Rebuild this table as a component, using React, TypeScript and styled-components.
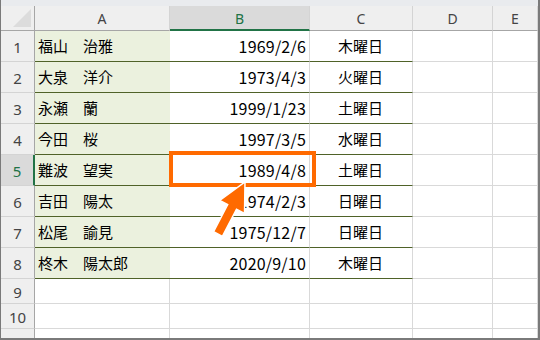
import React from "react";
import styled, { createGlobalStyle } from "styled-components";

const GlobalStyle = createGlobalStyle`
  html, body { margin: 0; padding: 0; background: #ffffff; }
  body { font-family: "Noto Sans CJK JP", "Noto Sans", sans-serif; }
  * { box-sizing: border-box; }
`;

const Frame = styled.div`
  position: relative;
  width: 540px;
  height: 340px;
  overflow: hidden;
  background: #ffffff;
  border-left: 1px solid #7a7a7a;
  border-right: 2px solid #7a7a7a;
  border-bottom: 2px solid #7a7a7a;
`;

const TopStrip = styled.div`
  height: 6px;
  background: #e9ebee;
`;

const Sheet = styled.div`
  display: grid;
  grid-template-columns: 34px 135px 140px 103px 80px 1fr;
  grid-template-rows: 25px repeat(8, 31px) 25px 25px 25px;
`;

const Corner = styled.div`
  background: #efefef;
  border-right: 1px solid #a6a6a6;
  border-bottom: 1px solid #a6a6a6;
  display: flex;
  align-items: flex-end;
  justify-content: flex-end;
  padding: 0 3px 3px 0;
`;

const ColHeader = styled.div<{ $selected?: boolean }>`
  display: flex;
  align-items: center;
  justify-content: center;
  font-family: "Noto Sans", "Liberation Sans", sans-serif;
  font-size: 14px;
  color: ${(p) => (p.$selected ? "#217346" : "#444444")};
  background: ${(p) => (p.$selected ? "#dadada" : "#efefef")};
  border-right: 1px solid #d4d4d4;
  border-bottom: ${(p) => (p.$selected ? "2px solid #217346" : "1px solid #a6a6a6")};
  padding-top: ${(p) => (p.$selected ? "1px" : "0")};
`;

const RowHeader = styled.div<{ $selected?: boolean }>`
  display: flex;
  align-items: center;
  justify-content: center;
  font-family: "Noto Sans", "Liberation Sans", sans-serif;
  font-size: 15px;
  color: ${(p) => (p.$selected ? "#217346" : "#444444")};
  background: ${(p) => (p.$selected ? "#dadada" : "#efefef")};
  border-right: ${(p) => (p.$selected ? "2px solid #217346" : "1px solid #a6a6a6")};
  border-bottom: 1px solid #d4d4d4;
  padding-top: 2px;
`;

type Align = "left" | "right" | "center";

const Cell = styled.div<{
  $fill?: boolean;
  $dark?: boolean;
  $align?: Align;
  $noRight?: boolean;
  $num?: boolean;
}>`
  display: flex;
  align-items: center;
  justify-content: ${(p) =>
    p.$align === "right" ? "flex-end" : p.$align === "center" ? "center" : "flex-start"};
  padding: 0 ${(p) => (p.$num ? "3px" : "4px")} 1px 3px;
  font-size: ${(p) => (p.$num ? "16px" : "15px")};
  letter-spacing: ${(p) => (p.$num ? "0.2px" : "0")};
  color: #000000;
  white-space: pre;
  background: ${(p) => (p.$fill ? "#ebf1de" : "#ffffff")};
  border-right: ${(p) => (p.$noRight ? "none" : "1px solid #d9d9d9")};
  border-bottom: 1px solid ${(p) => (p.$dark ? "#4f6228" : "#d9d9d9")};
`;

const Highlight = styled.div`
  position: absolute;
  left: 168px;
  top: 151px;
  width: 147px;
  height: 36px;
  border: 4px solid #ff6a00;
`;

const ArrowLayer = styled.svg`
  position: absolute;
  left: 0;
  top: 0;
  pointer-events: none;
`;

const rows: [string, string, string][] = [
  ["福山　治雅", "1969/2/6", "木曜日"],
  ["大泉　洋介", "1973/4/3", "火曜日"],
  ["永瀬　蘭", "1999/1/23", "土曜日"],
  ["今田　桜", "1997/3/5", "水曜日"],
  ["難波　望実", "1989/4/8", "土曜日"],
  ["吉田　陽太", "1974/2/3", "日曜日"],
  ["松尾　諭見", "1975/12/7", "日曜日"],
  ["柊木　陽太郎", "2020/9/10", "木曜日"],
];

const cols = ["A", "B", "C", "D", "E"];

export default function App() {
  return (
    <>
      <GlobalStyle />
      <Frame>
        <TopStrip />
        <Sheet>
          <Corner>
            <svg width="18" height="18" viewBox="0 0 18 18">
              <polygon points="18,0 18,18 0,18" fill="#dcdcdc" />
            </svg>
          </Corner>
          {cols.map((c) => (
            <ColHeader key={c} $selected={c === "B"}>
              {c}
            </ColHeader>
          ))}
          {rows.map((r, i) => (
            <React.Fragment key={i}>
              <RowHeader $selected={i === 4}>{i + 1}</RowHeader>
              <Cell $fill $dark $noRight>
                {r[0]}
              </Cell>
              <Cell $dark $align="right" $num>
                {r[1]}
              </Cell>
              <Cell $dark $align="center">
                {r[2]}
              </Cell>
              <Cell />
              <Cell />
            </React.Fragment>
          ))}
          {[9, 10, 11].map((n) => (
            <React.Fragment key={n}>
              <RowHeader>{n}</RowHeader>
              <Cell />
              <Cell />
              <Cell />
              <Cell />
              <Cell />
            </React.Fragment>
          ))}
        </Sheet>
        <Highlight />
        <ArrowLayer width="540" height="340" viewBox="-1 0 540 340">
          <polygon
            points="243,182 242.5,213.4 234.5,209.2 220.4,236.3 211.6,231.7 225.7,204.6 217.7,200.4"
            fill="#ff6a00"
            stroke="#ffffff"
            strokeWidth="1.5"
            strokeLinejoin="miter"
          />
        </ArrowLayer>
      </Frame>
    </>
  );
}
